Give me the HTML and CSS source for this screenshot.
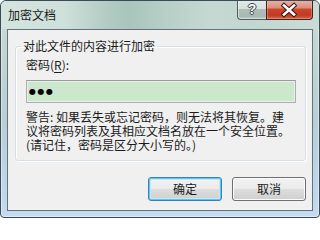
FILE: index.html
```html
<!DOCTYPE html>
<html lang="zh-CN">
<head>
<meta charset="utf-8">
<title>加密文档</title>
<link rel="stylesheet" href="styles.css">
</head>
<body>
<div class="window">
  <div class="titlebar">
    <div class="title">加密文档</div>
    <div class="caption-btns">
      <div class="cbtn help"><span class="qmark">?</span></div>
      <div class="cbtn close">
        <svg width="45" height="18" viewBox="0 0 45 18">
          <path d="M17 4.5 L27 13.5 M27 4.5 L17 13.5" stroke="#3a1a14" stroke-width="4.6" stroke-linecap="square" fill="none"/>
          <path d="M17 4.5 L27 13.5 M27 4.5 L17 13.5" stroke="#ffffff" stroke-width="2.6" stroke-linecap="square" fill="none"/>
        </svg>
      </div>
    </div>
  </div>
  <div class="client">
    <fieldset class="group">
      <legend>对此文件的内容进行加密</legend>
      <div class="label">密码(<u>R</u>):</div>
      <div class="field"><span class="dots">●●●</span></div>
      <div class="warn">
        <div class="line">警告: 如果丢失或忘记密码，则无法将其恢复。建</div>
        <div class="line">议将密码列表及其相应文档名放在一个安全位置。</div>
        <div class="line">(请记住，密码是区分大小写的。)</div>
      </div>
    </fieldset>
    <div class="buttons">
      <div class="btn default">确定</div>
      <div class="btn">取消</div>
    </div>
  </div>
</div>
</body>
</html>
```

FILE: styles.css
```css
html, body {
  margin: 0;
  padding: 0;
  background: #ffffff;
}

body {
  width: 320px;
  height: 218px;
  overflow: hidden;
  font-family: "Noto Sans CJK SC", "Noto Sans", sans-serif;
  font-size: 12px;
  line-height: 14px;
  color: #1a1a1a;
}

.window {
  box-sizing: border-box;
  width: 320px;
  height: 218px;
  border: 1px solid #3d4b57;
  border-radius: 6px 6px 4px 4px;
  background: linear-gradient(to bottom, #cfe0da 0%, #c2d7d1 20%, #b8cfd6 55%, #bcd6ec 85%, #c4dcf1 100%);
  box-shadow: inset 0 0 0 1px rgba(255, 255, 255, 0.45);
  display: flex;
  flex-direction: column;
  overflow: hidden;
}

.titlebar {
  height: 28px;
  display: flex;
  justify-content: space-between;
  align-items: flex-start;
  background: linear-gradient(to right, #d4e4de 0%, #cfe0da 20%, #b4cdc5 32%, #a9c5bc 40%, #b7cfc7 52%, #c5d9d2 66%, #c3d7d1 80%, #c9dcd6 100%);
  border-radius: 5px 5px 0 0;
}

.title {
  padding: 7px 0 0 7px;
  color: #1a1a1a;
}

.caption-btns {
  display: flex;
  margin-top: -1px;
  margin-right: 6px;
}

.cbtn {
  box-sizing: border-box;
  height: 20px;
  display: flex;
  align-items: center;
  justify-content: center;
}

.help {
  width: 29px;
  border: 1px solid #4e5c60;
  border-top: none;
  border-right: none;
  border-radius: 0 0 0 4px;
  background: linear-gradient(to bottom, #e4ebe9 0%, #d6e0dd 45%, #aebdb8 50%, #a9b9b4 85%, #bccac5 100%);
  box-shadow: inset 1px 0 0 rgba(255, 255, 255, 0.5), inset 0 -1px 0 rgba(255, 255, 255, 0.4);
}

.qmark {
  font-family: "Liberation Sans", "DejaVu Sans", sans-serif;
  font-weight: bold;
  font-size: 14px;
  line-height: 14px;
  color: #f4f6f6;
  text-shadow: -1px 0 0 #3e4a4e, 1px 0 0 #3e4a4e, 0 -1px 0 #3e4a4e, 0 1px 0 #3e4a4e;
  margin-top: -1px;
}

.close {
  width: 47px;
  border: 1px solid #4a1f16;
  border-top: none;
  border-radius: 0 0 4px 0;
  background: linear-gradient(to bottom, #e9b3a8 0%, #dc8f7f 40%, #c8462c 50%, #c03a22 80%, #d5674f 100%);
  box-shadow: inset 0 0 0 1px rgba(255, 200, 190, 0.35);
}

.close svg {
  display: block;
}

.client {
  flex: 1;
  margin: 0 6px 6px 6px;
  border: 1px solid #66717b;
  background: #f0f0f0;
  padding: 9px 6px 9px 7px;
  display: flex;
  flex-direction: column;
}

.group {
  margin: 0;
  padding: 5px 9px 8px 10px;
  border: 1px solid #d5dfe5;
  border-radius: 3px;
  box-shadow: inset 1px 1px 0 #ffffff, 1px 1px 0 #ffffff;
  min-width: 0;
}

.group legend {
  padding: 0 2px;
  margin-left: -5px;
  line-height: 14px;
  color: #1a1a1a;
}

.label {
  height: 14px;
}

.label u {
  text-decoration: underline;
  text-underline-offset: 2px;
}

.field {
  box-sizing: border-box;
  margin-top: 8px;
  height: 23px;
  border: 1px solid #abadb3;
  border-top-color: #9a9ca2;
  background: #cce8cc;
  box-shadow: inset 0 0 0 1px #e8f2e8;
  padding-left: 2px;
  display: flex;
  align-items: center;
}

.dots {
  font-family: "DejaVu Sans", sans-serif;
  font-size: 8px;
  letter-spacing: 1.5px;
  color: #000000;
  line-height: 8px;
}

.warn {
  margin-top: 7px;
  display: flex;
  flex-direction: column;
}

.line {
  height: 14px;
  line-height: 14px;
  white-space: nowrap;
}

.buttons {
  margin-top: 16px;
  display: flex;
  justify-content: flex-end;
  gap: 10px;
}

.btn {
  box-sizing: border-box;
  width: 74px;
  height: 24px;
  border: 1px solid #707070;
  border-radius: 3px;
  background: linear-gradient(to bottom, #f2f2f2 0%, #ebebeb 48%, #dddddd 52%, #cfcfcf 100%);
  box-shadow: inset 0 0 0 1px #fbfbfb;
  display: flex;
  align-items: center;
  justify-content: center;
  color: #1a1a1a;
}

.btn.default {
  border-color: #3c7fb1;
  box-shadow: inset 0 0 0 1px #5fc6f1, inset 0 0 0 2px #c4e8f8;
}
```
